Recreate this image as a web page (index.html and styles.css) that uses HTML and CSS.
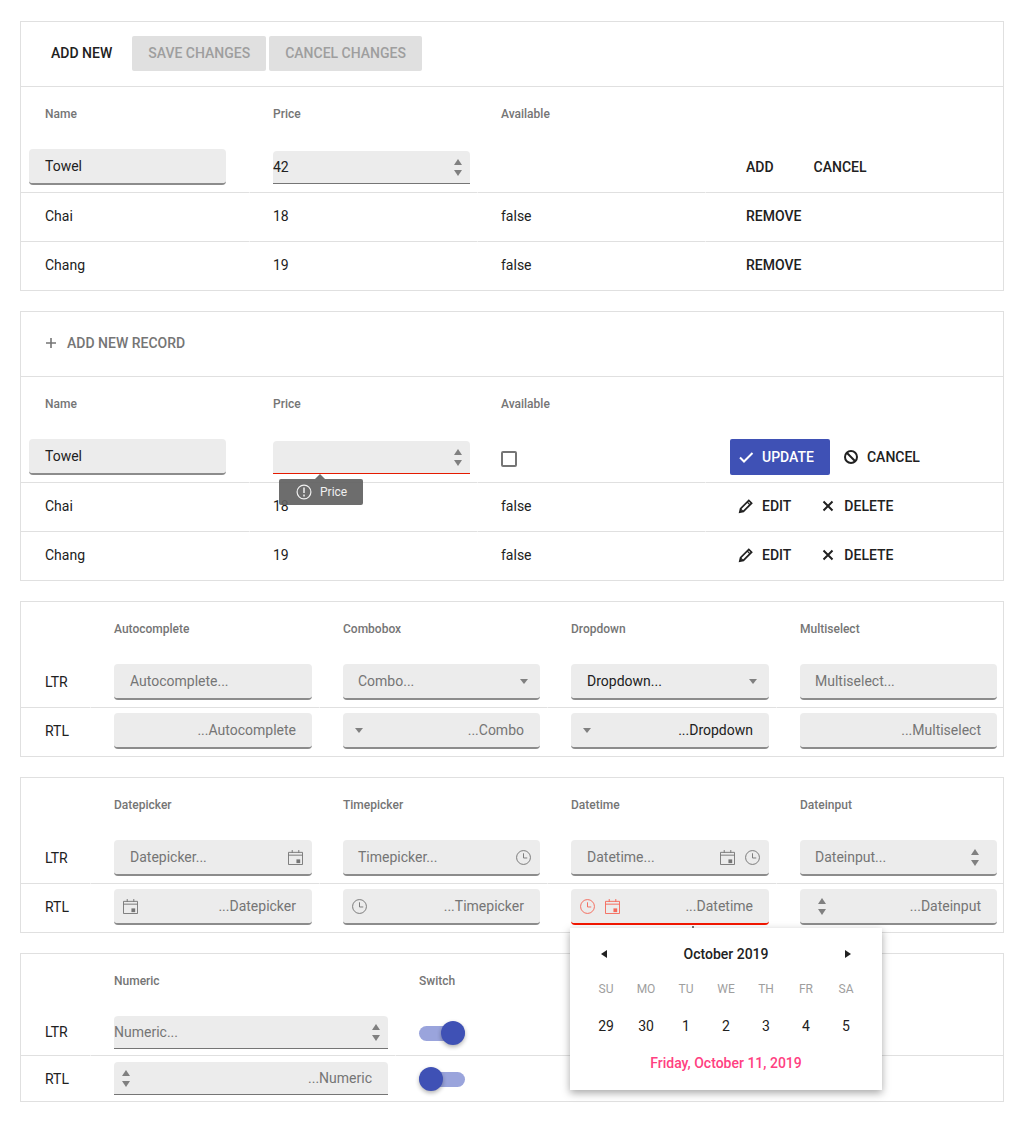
FILE: index.html
```html
<!DOCTYPE html>
<html lang="en">
<head>
    <meta charset="UTF-8">
    <title>Grid and form controls</title>
    <link rel="stylesheet" href="styles.css">
</head>
<body>
    <svg class="sprite" xmlns="http://www.w3.org/2000/svg">
        <symbol id="i-calendar" viewBox="0 0 16 16">
            <path d="M.5 2.5h15v13H.5zM.5 5.5h15M4.5 0v3M11.5 0v3" fill="none" stroke="currentColor"/>
            <path d="M9 10h4v4H9z" fill="currentColor"/>
        </symbol>
        <symbol id="i-clock" viewBox="0 0 16 16">
            <circle cx="8" cy="8" r="7.4" fill="none" stroke="currentColor"/>
            <path d="M8 3.5V8.5H12" fill="none" stroke="currentColor"/>
        </symbol>
        <symbol id="i-check" viewBox="0 0 16 16">
            <path d="M2 8.5L6 12.5L14.5 4" fill="none" stroke="currentColor" stroke-width="2"/>
        </symbol>
        <symbol id="i-cancel" viewBox="0 0 16 16">
            <circle cx="8" cy="8" r="6" fill="none" stroke="currentColor" stroke-width="2"/>
            <path d="M3.8 3.8L12.2 12.2" fill="none" stroke="currentColor" stroke-width="2"/>
        </symbol>
        <symbol id="i-edit" viewBox="0 0 16 16">
            <path d="M1.8 14.2L2.6 10.6L10.8 2.4L13.6 5.2L5.4 13.4Z" fill="none" stroke="currentColor" stroke-width="1.7"/>
            <path d="M9.2 4L12 6.8M2.5 11L5 13.5" fill="none" stroke="currentColor" stroke-width="1.2"/>
        </symbol>
        <symbol id="i-close" viewBox="0 0 16 16">
            <path d="M3.5 3.5L12.5 12.5M12.5 3.5L3.5 12.5" fill="none" stroke="currentColor" stroke-width="2"/>
        </symbol>
        <symbol id="i-plus" viewBox="0 0 16 16">
            <path d="M8 3V13M3 8H13" fill="none" stroke="currentColor" stroke-width="1.6"/>
        </symbol>
        <symbol id="i-alert" viewBox="0 0 16 16">
            <circle cx="8" cy="8" r="6.9" fill="none" stroke="currentColor" stroke-width="1.2"/>
            <path d="M8 3.5v5.5M8 10.5v2" fill="none" stroke="currentColor" stroke-width="1.5"/>
        </symbol>
    </svg>

    <div class="page">

        <!-- batch editing -->
        <div class="grid">
            <div class="toolbar">
                <button class="btn btn-first">Add new</button>
                <button class="btn btn-disabled">Save changes</button>
                <button class="btn btn-disabled">Cancel changes</button>
            </div>
            <div class="row cols-edit head">
                <div class="cell">Name</div>
                <div class="cell">Price</div>
                <div class="cell">Available</div>
                <div class="cell"></div>
            </div>
            <div class="row cols-edit edit-row">
                <div class="cell cell-name"><div class="field"><span class="value">Towel</span></div></div>
                <div class="cell cell-num">
                    <div class="numeric">
                        <span class="value">42</span>
                        <span class="spin"><i class="tri-up"></i><i class="tri-down"></i></span>
                    </div>
                </div>
                <div class="cell"></div>
                <div class="cell cell-actions">
                    <button class="btn btn-flat">Add</button>
                    <button class="btn btn-flat btn-next">Cancel</button>
                </div>
            </div>
            <div class="row cols-edit body-row">
                <div class="cell">Chai</div>
                <div class="cell">18</div>
                <div class="cell">false</div>
                <div class="cell cell-actions"><button class="btn btn-flat">Remove</button></div>
            </div>
            <div class="row cols-edit body-row last">
                <div class="cell">Chang</div>
                <div class="cell">19</div>
                <div class="cell">false</div>
                <div class="cell cell-actions"><button class="btn btn-flat">Remove</button></div>
            </div>
        </div>

        <!-- inline editing -->
        <div class="grid">
            <div class="toolbar">
                <button class="btn btn-icon btn-muted">
                    <svg class="icon"><use href="#i-plus"/></svg>Add new record
                </button>
            </div>
            <div class="row cols-edit head">
                <div class="cell">Name</div>
                <div class="cell">Price</div>
                <div class="cell">Available</div>
                <div class="cell"></div>
            </div>
            <div class="row cols-edit edit-row">
                <div class="cell cell-name"><div class="field"><span class="value">Towel</span></div></div>
                <div class="cell cell-num">
                    <div class="numeric numeric-invalid">
                        <span class="value"></span>
                        <span class="spin"><i class="tri-up"></i><i class="tri-down"></i></span>
                        <div class="tooltip">
                            <svg class="icon"><use href="#i-alert"/></svg>Price
                        </div>
                    </div>
                </div>
                <div class="cell cell-check"><span class="checkbox"></span></div>
                <div class="cell cell-actions cell-icons">
                    <button class="btn btn-icon btn-primary">
                        <svg class="icon"><use href="#i-check"/></svg>Update
                    </button>
                    <button class="btn btn-icon">
                        <svg class="icon"><use href="#i-cancel"/></svg>Cancel
                    </button>
                </div>
            </div>
            <div class="row cols-edit body-row">
                <div class="cell">Chai</div>
                <div class="cell">18</div>
                <div class="cell">false</div>
                <div class="cell cell-actions cell-icons">
                    <button class="btn btn-icon"><svg class="icon"><use href="#i-edit"/></svg>Edit</button>
                    <button class="btn btn-icon"><svg class="icon"><use href="#i-close"/></svg>Delete</button>
                </div>
            </div>
            <div class="row cols-edit body-row last">
                <div class="cell">Chang</div>
                <div class="cell">19</div>
                <div class="cell">false</div>
                <div class="cell cell-actions cell-icons">
                    <button class="btn btn-icon"><svg class="icon"><use href="#i-edit"/></svg>Edit</button>
                    <button class="btn btn-icon"><svg class="icon"><use href="#i-close"/></svg>Delete</button>
                </div>
            </div>
        </div>

        <!-- pickers -->
        <div class="grid">
            <div class="row cols-form head">
                <div class="cell"></div>
                <div class="cell">Autocomplete</div>
                <div class="cell">Combobox</div>
                <div class="cell">Dropdown</div>
                <div class="cell">Multiselect</div>
            </div>
            <div class="row cols-form form-row">
                <div class="cell">LTR</div>
                <div class="cell"><div class="field"><span class="value hint">Autocomplete...</span></div></div>
                <div class="cell"><div class="field"><span class="value hint">Combo...</span><i class="tri-down tri-select"></i></div></div>
                <div class="cell"><div class="field"><span class="value">Dropdown...</span><i class="tri-down tri-select"></i></div></div>
                <div class="cell"><div class="field"><span class="value hint">Multiselect...</span></div></div>
            </div>
            <div class="row cols-form form-row rtl-row last">
                <div class="cell">RTL</div>
                <div class="cell"><div class="field" dir="rtl"><span class="value hint">Autocomplete...</span></div></div>
                <div class="cell"><div class="field" dir="rtl"><span class="value hint">Combo...</span><i class="tri-down tri-select"></i></div></div>
                <div class="cell"><div class="field" dir="rtl"><span class="value">Dropdown...</span><i class="tri-down tri-select"></i></div></div>
                <div class="cell"><div class="field" dir="rtl"><span class="value hint">Multiselect...</span></div></div>
            </div>
        </div>

        <!-- dates -->
        <div class="grid">
            <div class="row cols-form head">
                <div class="cell"></div>
                <div class="cell">Datepicker</div>
                <div class="cell">Timepicker</div>
                <div class="cell">Datetime</div>
                <div class="cell">Dateinput</div>
            </div>
            <div class="row cols-form form-row">
                <div class="cell">LTR</div>
                <div class="cell"><div class="field"><span class="value hint">Datepicker...</span><span class="tools"><svg class="icon"><use href="#i-calendar"/></svg></span></div></div>
                <div class="cell"><div class="field"><span class="value hint">Timepicker...</span><span class="tools"><svg class="icon"><use href="#i-clock"/></svg></span></div></div>
                <div class="cell"><div class="field"><span class="value hint">Datetime...</span><span class="tools"><svg class="icon"><use href="#i-calendar"/></svg><svg class="icon"><use href="#i-clock"/></svg></span></div></div>
                <div class="cell"><div class="field"><span class="value hint">Dateinput...</span><span class="spin spin-date"><i class="tri-up"></i><i class="tri-down"></i></span></div></div>
            </div>
            <div class="row cols-form form-row rtl-row last">
                <div class="cell">RTL</div>
                <div class="cell"><div class="field" dir="rtl"><span class="value hint">Datepicker...</span><span class="tools"><svg class="icon"><use href="#i-calendar"/></svg></span></div></div>
                <div class="cell"><div class="field" dir="rtl"><span class="value hint">Timepicker...</span><span class="tools"><svg class="icon"><use href="#i-clock"/></svg></span></div></div>
                <div class="cell"><div class="field field-invalid" dir="rtl"><span class="value hint">Datetime...</span><span class="tools"><svg class="icon"><use href="#i-calendar"/></svg><svg class="icon"><use href="#i-clock"/></svg></span></div></div>
                <div class="cell"><div class="field" dir="rtl"><span class="value hint">Dateinput...</span><span class="spin spin-date"><i class="tri-up"></i><i class="tri-down"></i></span></div></div>
            </div>
        </div>

        <!-- numeric and switch -->
        <div class="grid">
            <div class="row cols-switch head">
                <div class="cell"></div>
                <div class="cell">Numeric</div>
                <div class="cell">Switch</div>
            </div>
            <div class="row cols-switch switch-row">
                <div class="cell">LTR</div>
                <div class="cell">
                    <div class="numeric"><span class="value hint">Numeric...</span><span class="spin"><i class="tri-up"></i><i class="tri-down"></i></span></div>
                </div>
                <div class="cell"><span class="switch switch-on"><span class="thumb"></span></span></div>
            </div>
            <div class="row cols-switch switch-row rtl-switch last">
                <div class="cell">RTL</div>
                <div class="cell">
                    <div class="numeric" dir="rtl"><span class="value hint value-pad">Numeric...</span><span class="spin"><i class="tri-up"></i><i class="tri-down"></i></span></div>
                </div>
                <div class="cell"><span class="switch switch-off"><span class="thumb"></span></span></div>
            </div>
        </div>

        <!-- calendar opened from the RTL datetime -->
        <div class="calendar">
            <div class="cal-head">
                <i class="arrow-left"></i>
                <span>October 2019</span>
                <i class="arrow-right"></i>
            </div>
            <div class="cal-names">
                <span>SU</span><span>MO</span><span>TU</span><span>WE</span><span>TH</span><span>FR</span><span>SA</span>
            </div>
            <div class="cal-days">
                <span>29</span><span>30</span><span>1</span><span>2</span><span>3</span><span>4</span><span>5</span>
            </div>
            <div class="cal-foot">Friday, October 11, 2019</div>
        </div>
    </div>
</body>
</html>
```

FILE: styles.css
```css
* {
    margin: 0;
    padding: 0;
    box-sizing: border-box;
}

body {
    font-family: Roboto, "Liberation Sans", sans-serif;
    font-size: 14px;
    color: #212121;
    background: #fff;
}

.sprite {
    display: none;
}

.page {
    position: relative;
    width: 1024px;
    padding: 21px 20px 19px;
}

.grid {
    border: 1px solid #e0e0e0;
    margin-bottom: 20px;
}

.grid:last-of-type {
    margin-bottom: 0;
}

.toolbar {
    display: flex;
    gap: 3px;
    height: 65px;
    padding: 14px 14px 0;
    border-bottom: 1px solid #e0e0e0;
}

.row {
    display: grid;
}

.cols-edit {
    grid-template-columns: 228px 228px 228px 1fr;
}

.cols-form {
    grid-template-columns: 69px 229px 228px 229px 1fr;
}

.cols-switch {
    grid-template-columns: 69px 305px 1fr;
}

.cell {
    display: flex;
    align-items: center;
    min-width: 0;
    padding: 0 7px 0 23px;
    border-left: 1px solid transparent;
    border-bottom: 1px solid #e0e0e0;
}

.row .cell:first-child {
    border-left: 0;
    padding-left: 24px;
}

.cols-form .cell:last-child {
    padding-right: 6px;
}

.row.last .cell {
    border-bottom: 0;
}

.head {
    height: 52px;
    font-size: 12px;
    font-weight: 500;
    color: #757575;
}

.head .cell {
    padding-top: 2px;
    border-bottom: 0;
}

.body-row {
    height: 49px;
}

.body-row .cell {
    padding-bottom: 2px;
}

.row.last.body-row {
    height: 48px;
}

.edit-row {
    height: 54px;
}

.edit-row .cell {
    align-items: flex-start;
    padding-top: 10px;
}

.row.edit-row .cell-name {
    padding-left: 8px;
    padding-right: 23px;
}

.row.edit-row .cell-num {
    padding-top: 12px;
}

.row.edit-row .cell-check {
    padding-top: 22px;
}

.form-row {
    height: 54px;
}

.form-row .cell {
    align-items: flex-start;
    padding-top: 10px;
}

.form-row .cell:first-child {
    padding-top: 2px;
    align-items: center;
}

.form-row.rtl-row {
    height: 48px;
}

.form-row.rtl-row .cell {
    padding-top: 5px;
}

.form-row.rtl-row .cell:first-child {
    padding-top: 0;
    padding-bottom: 2px;
}

.switch-row {
    height: 50px;
}

.switch-row .cell {
    align-items: flex-start;
    padding-top: 10px;
}

.switch-row .cell:first-child {
    padding-top: 2px;
    align-items: center;
}

.switch-row.rtl-switch {
    height: 45px;
}

.switch-row.rtl-switch .cell {
    padding-top: 6px;
}

.switch-row.rtl-switch .cell:first-child {
    padding-top: 0;
}

/* buttons */
.btn {
    display: inline-flex;
    align-items: center;
    height: 36px;
    padding: 0 16px;
    border: 0;
    border-radius: 2px;
    background: transparent;
    color: #212121;
    font-family: inherit;
    font-size: 14px;
    font-weight: 500;
    text-transform: uppercase;
    white-space: nowrap;
}

.toolbar .btn {
    height: 35px;
    padding-bottom: 2px;
}

.btn-first {
    margin-right: 1px;
}

.btn-disabled {
    background: #e0e0e0;
    color: #9e9e9e;
}

.btn-muted {
    color: #757575;
}

.btn-next {
    margin-left: 8px;
}

.btn-icon {
    padding: 0 16px 0 8px;
}

.btn-primary {
    background: #3f51b5;
    color: #fff;
}

.cell-actions {
    padding-left: 24px;
}

.cell-icons {
    gap: 5px;
}

.icon {
    display: block;
    flex: none;
    width: 16px;
    height: 16px;
}

.btn .icon {
    margin-right: 8px;
}

/* form fields */
.field,
.numeric {
    position: relative;
    display: flex;
    align-items: center;
    width: 100%;
    background: #ececec;
    border-radius: 4px 4px 0 0;
}

.field {
    height: 36px;
    border-bottom: 2px solid #8c8c8c;
    border-radius: 4px;
}

.numeric {
    height: 33px;
    border-bottom: 1px solid #757575;
}

.numeric-invalid {
    border-bottom-color: #e51a00;
}

.field-invalid {
    border-bottom-color: #f31700;
}

.value {
    flex: 1;
    min-width: 0;
}

.field .value {
    padding: 0 16px;
}

/* second and fourth form columns sit a pixel to the left */
.cols-form .cell:nth-child(odd) .field:not([dir]) .value {
    padding-left: 15px;
}

.value-pad {
    padding: 0 16px;
}

.hint {
    color: #757575;
}

.tools {
    display: flex;
    gap: 10px;
    padding: 0 9px;
    color: #757575;
}

.tools .icon {
    width: 15px;
    height: 15px;
}

.field-invalid .tools {
    color: #f4695a;
}

.spin {
    display: flex;
    flex-direction: column;
    gap: 5px;
    padding: 0 8px;
}

.spin-date {
    padding: 0 18px;
}

.tri-up,
.tri-down {
    display: block;
    width: 0;
    height: 0;
    border-left: 4px solid transparent;
    border-right: 4px solid transparent;
}

.tri-up {
    border-bottom: 6px solid #808080;
}

.tri-down {
    border-top: 6px solid #808080;
}

.tri-select {
    flex: none;
    margin: 0 12px;
    border-top-width: 5px;
}

.checkbox {
    display: block;
    width: 16px;
    height: 16px;
    border: 2px solid #757575;
    border-radius: 2px;
}

/* validation tooltip over the price field */
.tooltip {
    position: absolute;
    left: 6px;
    top: 38px;
    display: flex;
    align-items: center;
    gap: 8px;
    width: 84px;
    height: 26px;
    padding-left: 17px;
    background: rgba(97, 97, 97, 0.92);
    border-radius: 2px;
    color: #f0f0f0;
    font-size: 12px;
}

.tooltip::before {
    content: '';
    position: absolute;
    left: 36px;
    top: -5px;
    border-left: 5px solid transparent;
    border-right: 5px solid transparent;
    border-bottom: 5px solid rgba(97, 97, 97, 0.92);
}

/* switch */
.switch {
    position: relative;
    display: block;
    width: 46px;
    height: 15px;
    margin-top: 0;
    background: #9aa4dc;
    border-radius: 8px;
}

.switch-on,
.switch-off {
    margin-top: 10px;
}

.thumb {
    position: absolute;
    top: -5px;
    width: 24px;
    height: 24px;
    background: #3f51b5;
    border-radius: 50%;
    box-shadow: 0 2px 4px rgba(0, 0, 0, 0.3);
}

.switch-on .thumb {
    right: 0;
}

.switch-off .thumb {
    left: 0;
}

/* calendar popup */
.calendar {
    position: absolute;
    left: 570px;
    top: 928px;
    width: 312px;
    height: 162px;
    padding: 0 16px;
    background: #fff;
    box-shadow: 0 3px 8px rgba(0, 0, 0, 0.35);
}

.calendar::before {
    content: '';
    position: absolute;
    left: 122px;
    top: -2px;
    width: 2px;
    height: 2px;
    background: #707070;
}

.cal-head {
    display: flex;
    align-items: center;
    justify-content: space-between;
    height: 52px;
    padding: 0 15px;
    font-weight: 500;
}

.arrow-left,
.arrow-right {
    display: block;
    width: 0;
    height: 0;
    border-top: 4px solid transparent;
    border-bottom: 4px solid transparent;
}

.arrow-left {
    border-right: 6px solid #212121;
}

.arrow-right {
    border-left: 6px solid #212121;
}

.cal-names,
.cal-days {
    display: grid;
    grid-template-columns: repeat(7, 40px);
    text-align: center;
}

.cal-names {
    height: 18px;
    line-height: 18px;
    font-size: 12px;
    color: #9e9e9e;
}

.cal-days {
    height: 40px;
    line-height: 40px;
    margin-top: 8px;
}

.cal-foot {
    height: 34px;
    line-height: 34px;
    text-align: center;
    font-weight: 500;
    color: #ff4081;
}
```
